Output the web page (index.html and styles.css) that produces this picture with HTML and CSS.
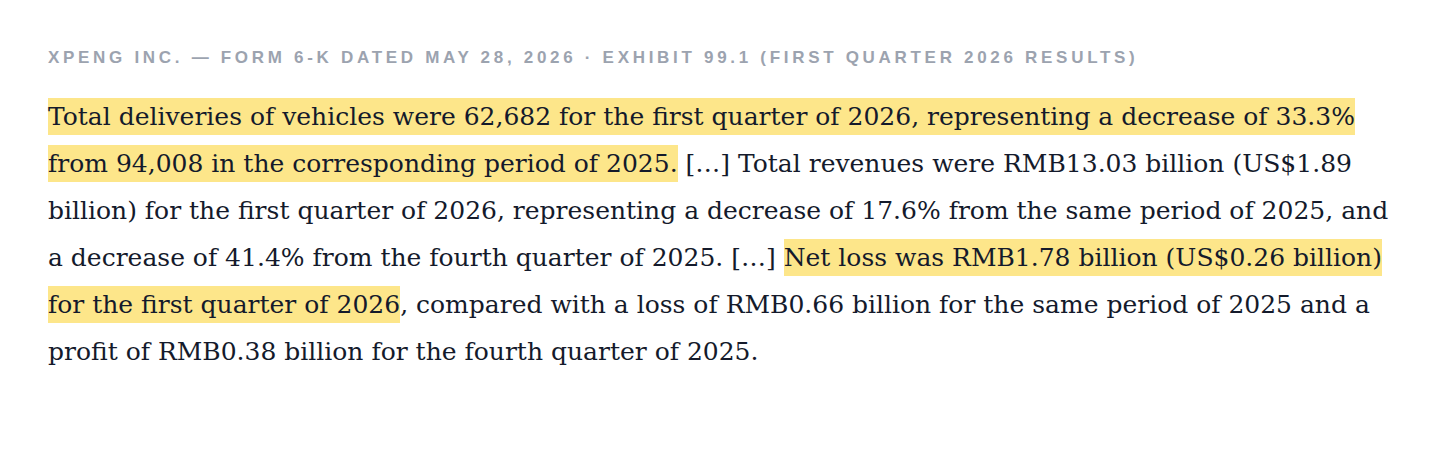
FILE: index.html
```html
<!DOCTYPE html>
<html lang="en">
<head>
<meta charset="utf-8">
<title>XPeng Inc. — Form 6-K excerpt</title>
<link rel="stylesheet" href="styles.css">
</head>
<body>
<main class="excerpt">
  <p class="source">XPeng Inc. — Form 6-K dated May 28, 2026 · Exhibit 99.1 (First Quarter 2026 Results)</p>
  <p class="quote"><mark class="hl">Total deliveries of vehicles were 62,682 for the first quarter of 2026, representing a decrease of 33.3% from 94,008 in the corresponding period of 2025.</mark> […] Total revenues were RMB13.03 billion (US$1.89 billion) for the first quarter of 2026, representing a decrease of 17.6% from the same period of 2025, and a decrease of 41.4% from the fourth quarter of 2025. […] <mark class="hl">Net loss was RMB1.78 billion (US$0.26 billion) for the first quarter of 2026</mark>, compared with a loss of RMB0.66 billion for the same period of 2025 and a profit of RMB0.38 billion for the fourth quarter of 2025.</p>
</main>
</body>
</html>
```
FILE: styles.css
```css
html, body {
  margin: 0;
  padding: 0;
  background: #ffffff;
}

.excerpt {
  padding: 47px 48px 0 48px;
}

.source {
  margin: 0;
  font-family: "Liberation Sans", Arial, sans-serif;
  font-weight: 700;
  font-size: 17px;
  line-height: 22px;
  letter-spacing: 3.7px;
  text-transform: uppercase;
  color: #9ca3af;
}

.quote {
  margin: 24px 0 0 0;
  font-family: "DejaVu Serif", Georgia, serif;
  font-size: 25px;
  line-height: 47px;
  color: #141a2b;
}

.hl {
  background: #fde68a;
  color: inherit;
  padding: 4px 0;
}
```
